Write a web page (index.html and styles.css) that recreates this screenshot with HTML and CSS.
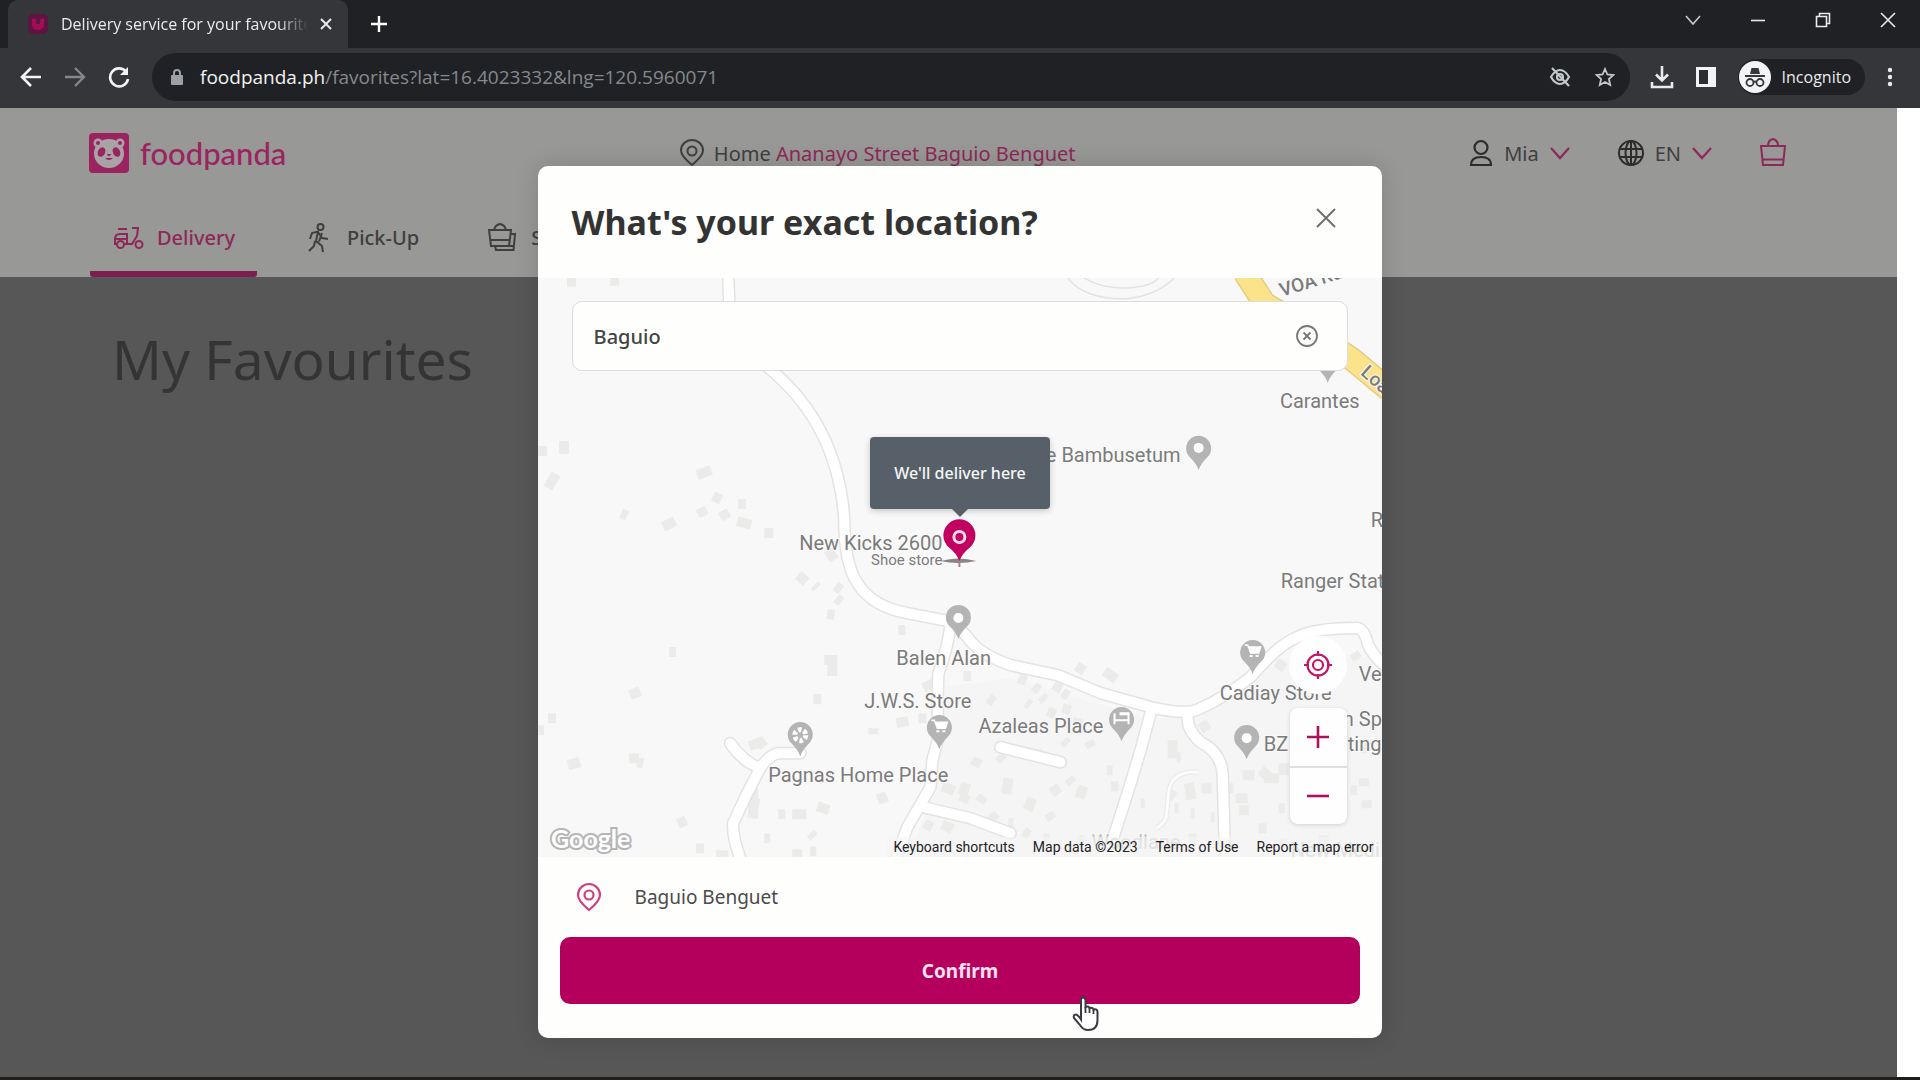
FILE: index.html
```html
<!DOCTYPE html>
<html lang="en">
<head>
<meta charset="utf-8">
<meta name="viewport" content="width=device-width, initial-scale=1">
<title>Delivery service for your favourites</title>
<link rel="stylesheet" href="styles.css">
</head>
<body>
<header class="browser">
  <div class="tab-strip">
    <div class="tab">
      <svg class="tab-favicon" width="22" height="22" viewBox="0 0 22 22"><rect x="1" y="1" width="20" height="20" rx="5" fill="#5c1440"/><path d="M5 6q3-2 4 1v4h4V7q2-3 4-1v5q0 6-6 6t-6-6z" fill="#a30d55"/></svg>
      <span class="tab-title">Delivery service for your favourites</span>
      <button class="icon-button" aria-label="Close tab"><svg width="12" height="12" viewBox="0 0 12 12" stroke="#e8eaed" stroke-width="2"><path d="M1 1l10 10M11 1L1 11"/></svg></button>
    </div>
    <button class="icon-button new-tab" aria-label="New tab"><svg width="18" height="18" viewBox="0 0 18 18" stroke="#fff" stroke-width="2.4"><path d="M9 1v16M1 9h16"/></svg></button>
    <div class="window-controls">
      <button class="icon-button" aria-label="Search tabs"><svg width="16" height="16" viewBox="0 0 16 16" fill="none" stroke="#c8cacc" stroke-width="1.6"><path d="M1 4l7 8 7-8"/></svg></button>
      <button class="icon-button" aria-label="Minimise"><svg width="16" height="16" viewBox="0 0 16 16" stroke="#e8eaed" stroke-width="1.6"><path d="M1 8.500h14"/></svg></button>
      <button class="icon-button" aria-label="Restore"><svg width="16" height="16" viewBox="0 0 16 16" fill="none" stroke="#e8eaed" stroke-width="1.6"><path d="M1.500 4.500h10v10h-10zM4.500 4.500v-3h10v10h-3"/></svg></button>
      <button class="icon-button" aria-label="Close window"><svg width="16" height="16" viewBox="0 0 16 16" stroke="#e8eaed" stroke-width="1.600"><path d="M1 1l14 14M15 1L1 15"/></svg></button>
    </div>
  </div>
  <div class="toolbar">
    <button class="icon-button nav-button" aria-label="Back"><svg width="22" height="22" viewBox="0 0 22 22" fill="none" stroke="#f1f3f4" stroke-width="2.6"><path d="M21 11H3M11 2l-9 9 9 9"/></svg></button>
    <button class="icon-button nav-button" aria-label="Forward"><svg width="22" height="22" viewBox="0 0 22 22" fill="none" stroke="#85878a" stroke-width="2.400"><path d="M1 11h18M11 2l9 9-9 9"/></svg></button>
    <button class="icon-button nav-button" aria-label="Reload"><svg width="22" height="22" viewBox="0 0 22 22" fill="none" stroke="#f1f3f4" stroke-width="2.600"><path d="M18 5.500A9 9 0 1 0 20 13"/><path d="M20 1v8h-8z" fill="#f1f3f4" stroke="none"/></svg></button>
    <div class="address">
      <svg width="14" height="18" viewBox="0 0 14 18"><rect x="1" y="7" width="12" height="10" rx="1" fill="#9aa0a6"/><path d="M4 8V5a3 3 0 0 1 6 0v3" fill="none" stroke="#9aa0a6" stroke-width="2"/></svg>
      <p class="url"><span class="url-host">foodpanda.ph</span>/favorites?lat=16.4023332&amp;lng=120.5960071</p>
      <button class="icon-button" aria-label="Third-party cookies blocked"><svg width="22" height="20" viewBox="0 0 22 20" fill="none" stroke="#c4c7c9" stroke-width="2.200"><path d="M2 10q4-7 9-7t9 7q-4 7-9 7t-9-7z"/><circle cx="11" cy="10" r="3"/><path d="M3 1l17 18"/></svg></button>
      <button class="icon-button" aria-label="Bookmark this page"><svg width="20" height="20" viewBox="0 0 20 20" fill="none" stroke="#c4c7c9" stroke-width="1.800"><path d="M10 2l2.400 5.500 6 .5-4.500 4 1.300 6L10 15l-5.200 3 1.300-6-4.500-4 6-.5z"/></svg></button>
    </div>
    <div class="toolbar-actions">
      <button class="icon-button" aria-label="Downloads"><svg width="24" height="24" viewBox="0 0 24 24" fill="none" stroke="#e8eaed" stroke-width="2.600"><path d="M12 1v14M6 9.500l6 6 6-6M2 17v5h20v-5"/></svg></button>
      <button class="icon-button" aria-label="Side panel"><svg width="20" height="20" viewBox="0 0 20 20"><path d="M0 0h20v20H0z" fill="#f1f3f4"/><path d="M3 3h9v14H3z" fill="#2c2d30"/></svg></button>
      <button class="profile"><svg width="32" height="32" viewBox="0 0 32 32"><circle cx="16" cy="16" r="16" fill="#f1f3f4"/><path d="M11 13l1.500-6h7l1.500 6z" fill="#35363a"/><g fill="none" stroke="#35363a" stroke-width="1.800"><path d="M6 15h20M14.500 21q1.500-1 3 0"/><circle cx="11" cy="21.500" r="3.500"/><circle cx="21" cy="21.500" r="3.500"/></g></svg>Incognito</button>
      <button class="icon-button" aria-label="Menu"><svg width="6" height="20" viewBox="0 0 6 20" fill="#e8eaed"><circle cx="3" cy="3" r="2.200"/><circle cx="3" cy="10" r="2.200"/><circle cx="3" cy="17" r="2.200"/></svg></button>
    </div>
  </div>
</header>

<div class="viewport">
  <div class="page">
    <header class="site-header">
      <div class="site-bar">
        <a class="brand" href="#">
          <svg width="40" height="40" viewBox="0 0 40 40"><rect width="40" height="40" rx="4" fill="#9b2460"/><g fill="#a9a3a6"><circle cx="9" cy="10" r="4.500"/><circle cx="31" cy="10" r="4.500"/><ellipse cx="20" cy="20.500" rx="15" ry="14.500"/></g><g fill="#9b2460"><circle cx="9" cy="10" r="2"/><circle cx="31" cy="10" r="2"/><ellipse cx="12.500" cy="19" rx="3.600" ry="5" transform="rotate(25 12.500 19)"/><ellipse cx="27.500" cy="19" rx="3.600" ry="5" transform="rotate(-25 27.500 19)"/><path d="M17.500 21h5l-2.500 2.500zM16 25q4 4 8 0z"/></g></svg>
          <span>foodpanda</span>
        </a>
        <a class="address-link" href="#">
          <svg width="24" height="28" viewBox="0 0 24 28" fill="none" stroke="#3f3f3f" stroke-width="2"><path d="M12 26Q1 17 1 11.500a11 10.500 0 0 1 22 0Q23 17 12 26z"/><circle cx="12" cy="12" r="4.500"/></svg>
          <span>Home <b>Ananayo Street Baguio Benguet</b></span>
        </a>
        <div class="account">
          <button class="menu-button">
            <svg width="24" height="28" viewBox="0 0 24 28" fill="none" stroke="#2c2c2c" stroke-width="2.200"><circle cx="12" cy="8.500" r="6.500"/><path d="M2 26q0-8 10-8t10 8z"/></svg>
            <span>Mia</span>
            <svg class="chevron" width="20" height="13" viewBox="0 0 20 13" fill="none" stroke="#8e2858" stroke-width="2.200"><path d="M1 1l9 10 9-10"/></svg>
          </button>
          <button class="menu-button">
            <svg width="26" height="28" viewBox="0 0 26 28" fill="none" stroke="#2c2c2c" stroke-width="2"><circle cx="13" cy="14" r="12"/><ellipse cx="13" cy="14" rx="5.500" ry="12"/><path d="M2 10h22M2 18h22M13 2v24"/></svg>
            <span>EN</span>
            <svg class="chevron" width="20" height="13" viewBox="0 0 20 13" fill="none" stroke="#8e2858" stroke-width="2.200"><path d="M1 1l9 10 9-10"/></svg>
          </button>
          <button class="icon-button" aria-label="Cart"><svg width="26" height="32" viewBox="0 0 26 32" fill="none" stroke="#8e2858" stroke-width="2"><path d="M1 9h24l-2 19H3zM2.500 22.500h21M8 9q0-6 5-7 5 1 5 7"/></svg></button>
        </div>
      </div>
      <nav class="verticals">
        <a class="vertical active" href="#">
          <svg width="32" height="32" viewBox="0 0 32 32" fill="none" stroke="#8e2858" stroke-width="2"><path d="M6 7h9M5 22H3v-5q0-5 5-5h7v10h-3M3 17h12M20 6h6l-1 8-5 8h-5"/><circle cx="8.500" cy="22.500" r="3.500"/><circle cx="27" cy="22.500" r="3.500"/></svg>
          <span>Delivery</span>
        </a>
        <a class="vertical" href="#">
          <svg width="32" height="32" viewBox="0 0 32 32" fill="none" stroke="#3f3f3f" stroke-width="2"><circle cx="18.500" cy="5" r="3"/><path d="M8 17l2-6 6-1.500L14 19l6 5 1 6M16 10l4 6 6 1M20 11l-3 8.500M13 19l-1 5-5 5"/></svg>
          <span>Pick-Up</span>
        </a>
        <a class="vertical" href="#">
          <svg width="32" height="32" viewBox="0 0 32 32" fill="none" stroke="#3f3f3f" stroke-width="2"><path d="M3 8h22l-2 16H5zM4.500 18h19M8 8q1-5 6-6 5 1 6 6M25 12h4l-1.500 16H10l-1-4M23.500 24H28"/></svg>
          <span>Shops</span>
        </a>
      </nav>
    </header>
    <main class="favourites"><h1>My Favourites</h1></main>
  </div>
  <div class="scrollbar"></div>

  <div class="dialog-layer">
    <section class="dialog" role="dialog" aria-labelledby="dialog-title">
      <header class="dialog-header">
        <h2 id="dialog-title">What's your exact location?</h2>
        <button class="icon-button close" aria-label="Close"><svg width="20" height="20" viewBox="0 0 20 20" stroke="#707070" stroke-width="2"><path d="M1 1l18 18M19 1L1 19"/></svg></button>
      </header>

      <div class="map">
        <svg class="map-canvas" viewBox="0 0 844 579" preserveAspectRatio="xMidYMid slice">
          <defs>
            <path id="pin" d="M0 0Q-2-6-8-12A12.500 12.500 0 1 1 8-12Q2-6 0 0z"/>
            <g id="cart"><path d="M-8-29h3l3 8h8l2-6H-4" fill="#fff" stroke="#fff" stroke-width="1.500"/><path d="M-3-18h9" stroke="#fff" stroke-width="2" stroke-dasharray="3 3"/></g>
            <g id="roads" fill="none" stroke-linecap="round" stroke-linejoin="round">
              <path d="M190-5L191 24Q200 65 235 94Q300 150 306 242Q306 285 319 305Q334 329 369 335L405 342Q418 346 429 359Q440 376 472 387L519 397L562 415L612 429Q650 438 662 430Q685 420 712 399Q740 366 759 359Q775 350 819 350Q826 352 829 366Q835 380 850 390"/>
              <path d="M412 349Q408 375 400 395L399 425L400 460L394 482L392 509L369 549L356 585M385 529L432 540L472 555M192 465Q205 484 222 490Q230 478 239 475H262M222 490L209 515L195 545Q194 560 204 585M612 435L602 472L589 515L573 565M649 437Q648 452 662 464Q682 474 684 495L686 564M462 469L522 484"/>
            </g>
          </defs>
          <rect width="844" height="579" fill="#f8f8f8"/>
          <path d="M470 400L610 440 660 440 735 380 844 380V579H370L400 500V410z" fill="#f5f5f5"/>
          <g class="buildings">
            <path d="M29 4h9M72 3h9M4 168v10M26 163v13M10 210l8-14M159 197l14-5M125 249l12-6M83 235l6 3M162 230l4 8M175 218l8 4M184 233l5 8M200 226h8M199 243l14 4M226 255h9M290 272l6 10M260 297l8 7M276 307l3 3M297 308l6 4M298 320l5 4M289 336l7 1M360 352h7M131 374h7M92 417l10-4M286 382h8v16M275 421h8M10 440h8M0 452h6M211 468l11-4 4 5M30 487l12-3M96 475v10M99 484l6 1M215 510v30M217 520l-3 20M240 536h7M254 536h14M279 528l12 4M140 546l8-4M158 570h8M226 560h6M272 555l4 4M178 577h12M254 576h10M272 573h6M335 450v6M358 445l12-2M342 515l4 10M395 405l-10 5M425 398h8M380 440h8"/>
            <path d="M404 508l12 5M386 545l8 4M404 546l10 5M428 505l-4 12M440 480l-4 8M538 388l8 5M566 393l12 8M480 400l8 3M450 420l6 4M495 408l6 4M503 418l4 4M515 407l8 4M488 424l4 3M509 433l8 3M524 414l6 4M524 430l8 2M540 440l-2 8M550 463l3 6M525 462l4 4M460 477l5 5M500 476h4M530 500l4 5M470 500l-2 16M428 516l-4 8M445 518l-4 6M494 520l-5 12M514 508l6 8M545 508l-4 12M510 535l4 6M540 560l6 5M485 553l6 4M505 560h6M452 536l6 6M470 545h5M568 492h6M572 508h8M602 525h4M634 462v18M638 479h4M648 452h6M670 445l-8 6M630 515l6 4M636 530h4M650 505l3 16M668 505v10M652 535h4M672 539h4M690 505v10M697 520h12M700 532h10M704 497h12M722 492l8 6M738 384l8 6M725 500h15M745 485v12M812 512h6M825 500v8M822 470h6M828 522v8M740 530h6M720 550h8M650 560h8M740 565h8M780 562h10M815 375l4 6M765 372h6"/>
          </g>
          <path d="M529 0Q546 22 588 21Q618 18 636 0M545 0Q565 12 592 10Q615 8 620 0" fill="none" stroke="#e2e2e2" stroke-width="1.500"/>
          <path d="M660 494Q632 492 630 515L628 535Q628 544 618 550" fill="none" stroke="#e9e9e9" stroke-width="5"/>
          <path d="M660 494Q632 492 630 515L628 535Q628 544 618 550" fill="none" stroke="#fcfcfc" stroke-width="3"/>
          <use href="#roads" stroke="#e5e3e1" stroke-width="13"/>
          <use href="#roads" stroke="#fff" stroke-width="10"/>
          <path d="M706-5L726 26Q770 50 814 82L850 112" fill="none" stroke="#e3cd80" stroke-width="24"/>
          <path d="M706-5L726 26Q770 50 814 82L850 112" fill="none" stroke="#fbe38c" stroke-width="21"/>
          <g fill="#b4b4b4">
            <use href="#pin" x="660" y="192"/><use href="#pin" x="789" y="105"/><use href="#pin" x="420" y="361"/><use href="#pin" x="262" y="478"/><use href="#pin" x="401" y="471"/><use href="#pin" x="583" y="463"/><use href="#pin" x="714" y="396"/><use href="#pin" x="708" y="481"/>
          </g>
          <g fill="#fff"><circle cx="660" cy="170" r="5"/><circle cx="420" cy="340" r="5"/><circle cx="708" cy="460" r="5"/><path d="M575 435h2v6h12v-4h-8v-3h10v12h-2v-3h-12v3h-2z"/></g>
          <circle cx="262" cy="457" r="5.500" fill="none" stroke="#fff" stroke-width="5" stroke-dasharray="3.500 2.260"/>
          <use href="#cart" x="401" y="471"/><use href="#cart" x="714" y="396"/>
          <g class="place">
            <text x="404" y="272" text-anchor="end">New Kicks 2600</text>
            <text class="place-kind" x="404" y="287" text-anchor="end">Shoe store</text>
            <text x="642" y="184" text-anchor="end">e Bambusetum</text>
            <text x="781" y="130" text-anchor="middle">Carantes</text>
            <text x="832" y="249">R</text>
            <text x="742" y="310">Ranger Stat</text>
            <text x="358" y="387">Balen Alan</text>
            <text x="326" y="430">J.W.S. Store</text>
            <text x="230" y="504">Pagnas Home Place</text>
            <text x="440" y="455">Azaleas Place</text>
            <text x="681" y="422">Cadiay Store</text>
            <text x="820" y="403">Ve</text>
            <text x="804" y="448">n Sp</text>
            <text x="725" y="473">BZ</text>
            <text x="809" y="473">ting</text>
            <text class="road-name" x="743" y="19" transform="rotate(-17 743 19)">VOA Rd</text>
            <text class="road-name" x="821" y="96" transform="rotate(42 821 96)">Loa</text>
            <text class="faint" x="553" y="571">Woodlane</text>
            <text class="faint" x="752" y="579">New Medi</text>
          </g>
          <text class="google" x="13" y="570">Google</text>
          <path d="M402 283q18-5 36 0q-18 4-36 0z" fill="#8a8487"/><path d="M420 281h2v8h-2z" fill="#9b8790"/>
          <path d="M421 283Q418 275 410 269A16 16 0 1 1 432 269Q424 275 421 283z" fill="#c2005f"/>
          <circle cx="421" cy="259" r="5.500" fill="#c2005f" stroke="#ffd9ec" stroke-width="3"/>
        </svg>
        <div class="search">
          <input type="text" value="Baguio" aria-label="Search for an address">
          <button class="icon-button" aria-label="Clear"><svg width="22" height="22" viewBox="0 0 22 22" fill="none" stroke="#777" stroke-width="1.800"><circle cx="11" cy="11" r="10"/><path d="M7.500 7.500l7 7M14.500 7.500l-7 7"/></svg></button>
        </div>
        <p class="tooltip">We'll deliver here</p>
        <div class="map-controls">
          <button class="locate" aria-label="Use my location"><svg width="28" height="28" viewBox="0 0 28 28" fill="none" stroke="#c21566" stroke-width="2.200"><circle cx="14" cy="14" r="10.500"/><circle cx="14" cy="14" r="5"/><path d="M14 0v5M14 23v5M0 14h5M23 14h5"/></svg></button>
          <div class="zoom">
            <button aria-label="Zoom in"><svg width="24" height="24" viewBox="0 0 24 24" stroke="#b00f5c" stroke-width="2.600"><path d="M12 1v22M1 12h22"/></svg></button>
            <button aria-label="Zoom out"><svg width="24" height="24" viewBox="0 0 24 24" stroke="#b00f5c" stroke-width="2.600"><path d="M1 12h22"/></svg></button>
          </div>
        </div>
        <div class="attribution">
          <button>Keyboard shortcuts</button>
          <span>Map data ©2023</span>
          <a href="#">Terms of Use</a>
          <a href="#">Report a map error</a>
        </div>
      </div>

      <footer class="dialog-footer">
        <div class="chosen">
          <svg width="26" height="30" viewBox="0 0 26 30" fill="none" stroke="#d13d80" stroke-width="2.200"><path d="M13 28Q2 19 2 13a11 11 0 0 1 22 0Q24 19 13 28z"/><circle cx="13" cy="13" r="4.500"/></svg>
          <span>Baguio Benguet</span>
        </div>
        <button class="confirm">Confirm</button>
      </footer>
      <svg class="cursor" width="28" height="36" viewBox="0 0 28 36"><path d="M9 21V4q0-2.500 2-2.500T13.500 4v7q3-1.500 4 1 3-1 4 1.500 4-1 4 2.500v8q0 10-9.500 10-5 0-8-5L2 22q-1-3 1.500-3.500 2-.5 5.500 5z" fill="#fff" stroke="#3a3a42" stroke-width="2"/><path d="M13.500 11v6M17.500 12v5M21.500 13.500V18" stroke="#3a3a42" stroke-width="1.800"/></svg>
    </section>
  </div>
</div>
<footer class="taskbar"></footer>
</body>
</html>
```
FILE: styles.css
```css
* {
  box-sizing: border-box;
}

body {
  margin: 0;
  min-height: 100vh;
  display: flex;
  flex-direction: column;
  background: #575757;
  font-family: "Noto Sans", "Open Sans", sans-serif;
  font-size: 20px;
  color: #3f3f3f;
}

h1, h2, p {
  margin: 0;
}

a {
  color: inherit;
  text-decoration: none;
}

button {
  padding: 0;
  border: 0;
  background: none;
  font: inherit;
  color: inherit;
}

svg {
  display: block;
  flex: none;
}

.icon-button {
  display: grid;
  place-items: center;
}

/* Browser window */

.browser {
  background: #35363a;
  color: #e8eaed;
  font-family: "Open Sans", "Noto Sans", sans-serif;
}

.tab-strip {
  display: flex;
  height: 48px;
  padding-left: 8px;
  background: #202124;
}

.tab {
  display: flex;
  align-items: center;
  gap: 12px;
  width: 340px;
  padding: 0 16px 0 19px;
  border-radius: 10px 10px 0 0;
  background: #35363a;
  font-size: 16px;
}

.tab-title {
  flex: 1;
  overflow: hidden;
  white-space: nowrap;
  mask-image: linear-gradient(to right, #000 88%, transparent);
}

.new-tab {
  margin-left: 22px;
}

.window-controls {
  display: flex;
  gap: 49px;
  height: 40px;
  margin-left: auto;
  padding-right: 24px;
}

.toolbar {
  display: flex;
  align-items: center;
  height: 60px;
  padding: 0 27px 2px 20px;
}

.nav-button {
  width: 22px;
  margin-right: 22px;
}

.address {
  display: flex;
  flex: 1;
  align-items: center;
  gap: 24px;
  height: 48px;
  padding: 0 15px 0 18px;
  border-radius: 24px;
  background: #202124;
}

.url {
  flex: 1;
  margin-left: -8px;
  font-size: 19px;
  color: #85898d;
}

.url-host {
  color: #f1f3f4;
}

.toolbar-actions {
  display: flex;
  align-items: center;
  gap: 22px;
  margin-left: 20px;
}

.profile {
  display: flex;
  align-items: center;
  gap: 11px;
  height: 36px;
  padding: 0 14px 0 1px;
  border-radius: 18px;
  background: #202124;
  font-size: 16px;
}

/* Page under the dialog */

.viewport {
  position: relative;
  display: flex;
  flex: 1;
}

.page {
  flex: 1;
}

.scrollbar {
  width: 23px;
  background: #fff;
}

.site-header {
  background: #989896;
}

.site-bar {
  display: flex;
  align-items: center;
  justify-content: space-between;
  height: 90px;
  padding: 0 111px 0 89px;
}

.brand {
  display: flex;
  align-items: center;
  gap: 11px;
  font-family: Lato, "Open Sans", sans-serif;
  font-size: 31px;
  font-weight: 500;
  color: #9b2460;
}

.address-link {
  display: flex;
  align-items: center;
  gap: 10px;
}

.address-link b {
  font-weight: 400;
  color: #8e2858;
}

.account {
  display: flex;
  align-items: center;
  gap: 48px;
}

.menu-button {
  display: flex;
  align-items: center;
  gap: 11px;
}

.verticals {
  display: flex;
  gap: 23px;
  height: 79px;
  padding-left: 90px;
}

.vertical {
  display: flex;
  align-items: center;
  gap: 13px;
  padding: 6px 22px 0;
  border-bottom: 6px solid transparent;
  border-radius: 3px;
  font-weight: 500;
}

.vertical.active {
  border-bottom-color: #7d1f4e;
  color: #8e2858;
}

.favourites {
  padding: 42px 112px;
}

.favourites h1 {
  font-size: 55px;
  line-height: 80px;
  font-weight: 400;
  color: #343434;
}

/* Location dialog */

.dialog-layer {
  position: absolute;
  inset: 0;
  display: flex;
  align-items: flex-start;
  justify-content: center;
  padding-top: 58px;
}

.dialog {
  position: relative;
  width: 44%;
  min-width: 720px;
  overflow: hidden;
  border-radius: 10px;
  background: #fefefd;
  box-shadow: 0 0 24px rgba(0, 0, 0, 0.15);
}

.dialog-header {
  display: flex;
  align-items: center;
  justify-content: space-between;
  height: 112px;
  padding: 0 46px 0 34px;
}

.dialog-header h2 {
  font-size: 34px;
  font-weight: 700;
  color: #333;
}

.close {
  padding-bottom: 8px;
}

.map {
  position: relative;
}

.map-canvas {
  width: 100%;
  height: 579px;
}

.buildings {
  fill: none;
  stroke: #ebebea;
  stroke-width: 10px;
}

.place {
  font-family: Roboto, sans-serif;
  font-size: 20px;
  fill: #7b7b7b;
  stroke: #fafafa;
  stroke-width: 2px;
  paint-order: stroke;
}

.place-kind {
  font-size: 15px;
}

.road-name {
  font-size: 19px;
  font-weight: 500;
}

.faint {
  fill: #c2c2c2;
}

.google {
  font-family: Lato, sans-serif;
  font-size: 25px;
  font-weight: 700;
  fill: #fff;
  stroke: #b5b5b5;
  stroke-width: 4px;
  paint-order: stroke;
}

.search {
  position: absolute;
  top: 23px;
  left: 34px;
  right: 34px;
  display: flex;
  align-items: center;
  height: 70px;
  padding: 0 29px 0 21px;
  border: 1px solid #dcdcdc;
  border-radius: 10px;
  background: #fefefd;
}

.search input {
  flex: 1;
  padding: 0;
  border: 0;
  outline: 0;
  background: none;
  font: inherit;
  font-weight: 500;
  color: #444;
}

.tooltip {
  position: absolute;
  top: 159px;
  left: 50%;
  width: 180px;
  margin-left: -90px;
  border-radius: 4px;
  background: #576069;
  box-shadow: 0 2px 6px rgba(0, 0, 0, 0.2);
  font-size: 16px;
  font-weight: 500;
  line-height: 72px;
  text-align: center;
  color: #f5f5f5;
}

.tooltip::after {
  content: "";
  position: absolute;
  top: 100%;
  left: 50%;
  margin-left: -8px;
  border: 8px solid transparent;
  border-top-color: #576069;
  border-bottom: 0;
}

.map-controls {
  position: absolute;
  right: 35px;
  bottom: 33px;
  display: flex;
  flex-direction: column;
  align-items: center;
  gap: 14px;
}

.locate {
  display: grid;
  place-items: center;
  width: 58px;
  height: 58px;
  border-radius: 50%;
  background: #fefefe;
}

.zoom {
  border-radius: 8px;
  background: #fefefe;
  box-shadow: 0 1px 4px rgba(0, 0, 0, 0.15);
}

.zoom button {
  display: grid;
  place-items: center;
  width: 57px;
  height: 58px;
}

.zoom button + button {
  border-top: 2px solid #dedede;
}

.attribution {
  position: absolute;
  right: 0;
  bottom: 0;
  display: flex;
  gap: 18px;
  padding: 0 9px 0 6px;
  background: rgba(245, 245, 245, 0.6);
  font-family: Roboto, sans-serif;
  font-size: 14px;
  line-height: 20px;
  color: #222;
}

.dialog-footer {
  padding: 0 22px 34px;
}

.chosen {
  display: flex;
  align-items: center;
  gap: 33px;
  height: 80px;
  padding-left: 16px;
  font-size: 19px;
  color: #4a4a4a;
}

.confirm {
  width: 100%;
  height: 67px;
  border-radius: 10px;
  background: #b4005c;
  font-size: 19px;
  font-weight: 700;
  color: #ffe0f0;
}

.cursor {
  position: absolute;
  top: 830px;
  left: 534px;
}

.taskbar {
  height: 3px;
  background: #211d1d;
}
```
